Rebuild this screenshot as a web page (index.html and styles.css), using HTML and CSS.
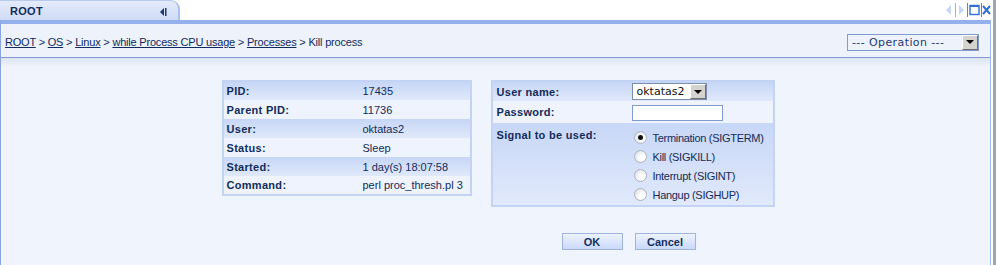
FILE: index.html
```
<!DOCTYPE html>
<html lang="en">
<head>
  <meta charset="UTF-8" />
  <title>Kill process</title>
  <link rel="stylesheet" href="styles.css">
</head>
<body>

  <div class="window">
    <div class="tabbar">
      <div class="tab">
        <span>ROOT</span>
        <svg class="tab-collapse" width="7" height="8" viewBox="0 0 7 8">
          <polygon points="4,0 0,4 4,8" fill="#1b3a6e"/>
          <rect x="5" y="0" width="1.5" height="8" fill="#1b3a6e"/>
        </svg>
      </div>
      <svg class="win-controls" width="48" height="16" viewBox="0 0 48 16">
        <polygon points="8,3 3,8 8,13" fill="#c6d7f5"/>
        <line x1="12.5" y1="1" x2="12.5" y2="15" stroke="#8fb0ea"/>
        <polygon points="16,3 21,8 16,13" fill="#c6d7f5"/>
        <line x1="24.5" y1="1" x2="24.5" y2="15" stroke="#4f86e0"/>
        <rect x="27" y="3.5" width="9" height="9" fill="none" stroke="#2f6fd8" stroke-width="1.4"/>
        <line x1="27" y1="4" x2="36" y2="4" stroke="#2f6fd8" stroke-width="2"/>
        <line x1="38.5" y1="1" x2="38.5" y2="15" stroke="#4f86e0"/>
        <path d="M40 4 L47 12 M47 4 L40 12" stroke="#2f6fd8" stroke-width="2"/>
      </svg>
    </div>

    <div class="panel">
      <div class="crumbs">
        <div class="path">
          <a href="#">ROOT</a> &gt; <a href="#">OS</a> &gt; <a href="#">Linux</a> &gt;
          <a href="#">while Process CPU usage</a> &gt; <a href="#">Processes</a> &gt; Kill process
        </div>
        <div class="combo combo-op">
          <span class="combo-text">--- Operation ---</span>
          <span class="combo-arrow"></span>
        </div>
      </div>

      <div class="content">
        <div class="forms">
          <table class="info">
            <tr class="dark"><td class="lbl">PID:</td><td>17435</td></tr>
            <tr><td class="lbl">Parent PID:</td><td>11736</td></tr>
            <tr class="dark"><td class="lbl">User:</td><td>oktatas2</td></tr>
            <tr><td class="lbl">Status:</td><td>Sleep</td></tr>
            <tr class="dark"><td class="lbl">Started:</td><td>1 day(s) 18:07:58</td></tr>
            <tr><td class="lbl">Command:</td><td>perl proc_thresh.pl 3</td></tr>
          </table>

          <table class="kill">
            <tr class="dark row-user">
              <td class="lbl">User name:</td>
              <td>
                <div class="combo combo-user">
                  <span class="combo-text">oktatas2</span>
                  <span class="combo-arrow"></span>
                </div>
              </td>
            </tr>
            <tr class="row-pass">
              <td class="lbl">Password:</td>
              <td><input type="password" class="pass"></td>
            </tr>
            <tr class="signal">
              <td class="lbl">Signal to be used:</td>
              <td>
                <div class="radios">
                  <label class="opt"><span class="radio checked"></span>Termination (SIGTERM)</label>
                  <label class="opt"><span class="radio"></span>Kill (SIGKILL)</label>
                  <label class="opt"><span class="radio"></span>Interrupt (SIGINT)</label>
                  <label class="opt"><span class="radio"></span>Hangup (SIGHUP)</label>
                </div>
              </td>
            </tr>
          </table>

          <div class="actions">
            <button class="btn">OK</button>
            <button class="btn">Cancel</button>
          </div>
        </div>
      </div>
    </div>
  </div>
  <div class="edge"></div>

</body>
</html>
```

FILE: styles.css
```
* { box-sizing: border-box; }
body {
  margin: 0;
  height: 265px;
  overflow: hidden;
  display: flex;
  background: #fff;
  font-family: 'Liberation Sans', Arial, sans-serif;
  font-size: 11px;
  color: #122c5a;
}

.window {
  width: 991px;
  display: flex;
  flex-direction: column;
}

.edge {
  width: 3px;
  margin-left: 2px;
  background: #9ea7b1;
}

/* Tab strip */
.tabbar {
  height: 20px;
  display: flex;
  justify-content: space-between;
}

.tab {
  width: 180px;
  height: 20px;
  padding: 0 11px 0 10px;
  display: flex;
  align-items: center;
  justify-content: space-between;
  font-weight: bold;
  letter-spacing: 0.3px;
  background: linear-gradient(#e4ebfb, #cfdbf6);
  border-top: 1px solid #b7caf0;
  border-right: 2px solid #a9c0ee;
  border-radius: 0 9px 0 0;
}

.tab-collapse { margin-top: 2px; }

.win-controls { margin: 2px 0 0 0; }

/* Panel */
.panel {
  flex: 1;
  display: flex;
  flex-direction: column;
  border-top: 4px solid #95b1ed;
  border-left: 1px solid #8ba5dc;
  border-right: 1px solid #9fb8ee;
}

.crumbs {
  height: 34px;
  padding: 3px 11px 0 4px;
  display: flex;
  align-items: center;
  justify-content: space-between;
  background: #eef2fb;
  border-bottom: 1px solid #7f9bd0;
}

.path { letter-spacing: -0.2px; }

.crumbs a { color: #0f2b60; }

.combo {
  display: flex;
  align-items: center;
  height: 17px;
  border: 1px solid #7f9bd0;
  font-family: 'DejaVu Sans', Verdana, sans-serif;
  font-size: 11px;
}

.combo-text { flex: 1; padding-left: 4px; }

.combo-op {
  width: 132px;
  color: #1c3a70;
  letter-spacing: 0.4px;
}

.combo-user {
  width: 75px;
  background: #fff;
  border-color: #7d8db0;
  color: #111;
}

.combo-arrow {
  width: 16px;
  height: 15px;
  background: #d6d3ce;
  border: 1px solid;
  border-color: #fff #6f6f6f #6f6f6f #fff;
  display: flex;
  align-items: center;
  justify-content: center;
}

.combo-arrow::after {
  content: '';
  border-left: 4px solid transparent;
  border-right: 4px solid transparent;
  border-top: 4px solid #000;
}

/* Content */
.content {
  flex: 1;
  padding-top: 22px;
  background: linear-gradient(#dce4f3, #f0f4fd 9px);
}

.forms {
  display: grid;
  grid-template-columns: 250px 284px;
  column-gap: 19px;
  justify-content: center;
  align-items: start;
  padding-left: 5px;
}

table {
  border-collapse: collapse;
  border: 2px solid #c3d3f3;
  font-size: 11px;
}

td {
  padding: 0;
  height: 19px;
  background: #eef3fd;
}

tr.dark td { background: linear-gradient(#c6d6f6, #e0e9fb); }

.lbl {
  font-weight: bold;
  padding-left: 3px;
  letter-spacing: 0.3px;
}

.info { width: 250px; }
.info .lbl { width: 140px; }

.kill { width: 284px; }
.kill .lbl { width: 140px; padding-left: 4px; }
.row-user td { height: 20px; }
.row-pass td { height: 22px; }

.pass {
  width: 91px;
  height: 16px;
  margin-top: 1px;
  border: 1px solid #7f9bd0;
  background: #fff;
  display: block;
}

.signal td {
  height: 83px;
  vertical-align: top;
  background: linear-gradient(#c7d7f7, #e1e9fb);
}

.signal .lbl { padding-top: 6px; }

.radios {
  padding: 8px 0 0 2px;
  display: flex;
  flex-direction: column;
  gap: 6px;
  letter-spacing: -0.3px;
}

.opt {
  display: flex;
  align-items: center;
  gap: 6px;
  height: 13px;
}

.radio {
  width: 13px;
  height: 13px;
  border-radius: 50%;
  border: 1px solid #aab3bf;
  background: radial-gradient(circle at 70% 70%, #fff 25%, #d6dae0);
  position: relative;
}

.radio.checked::after {
  content: '';
  position: absolute;
  left: 3px; top: 3px;
  width: 5px; height: 5px;
  border-radius: 50%;
  background: #111;
}

.actions {
  grid-column: 2;
  display: flex;
  justify-content: center;
  gap: 12px;
  margin-top: 26px;
  padding-right: 8px;
}

.btn {
  width: 61px;
  height: 17px;
  padding: 0;
  border: 1px solid #a0b4e0;
  background: linear-gradient(#eef3fe, #c9d9fb);
  font-family: 'Liberation Sans', Arial, sans-serif;
  font-size: 11px;
  font-weight: bold;
  color: #15305f;
}
```
